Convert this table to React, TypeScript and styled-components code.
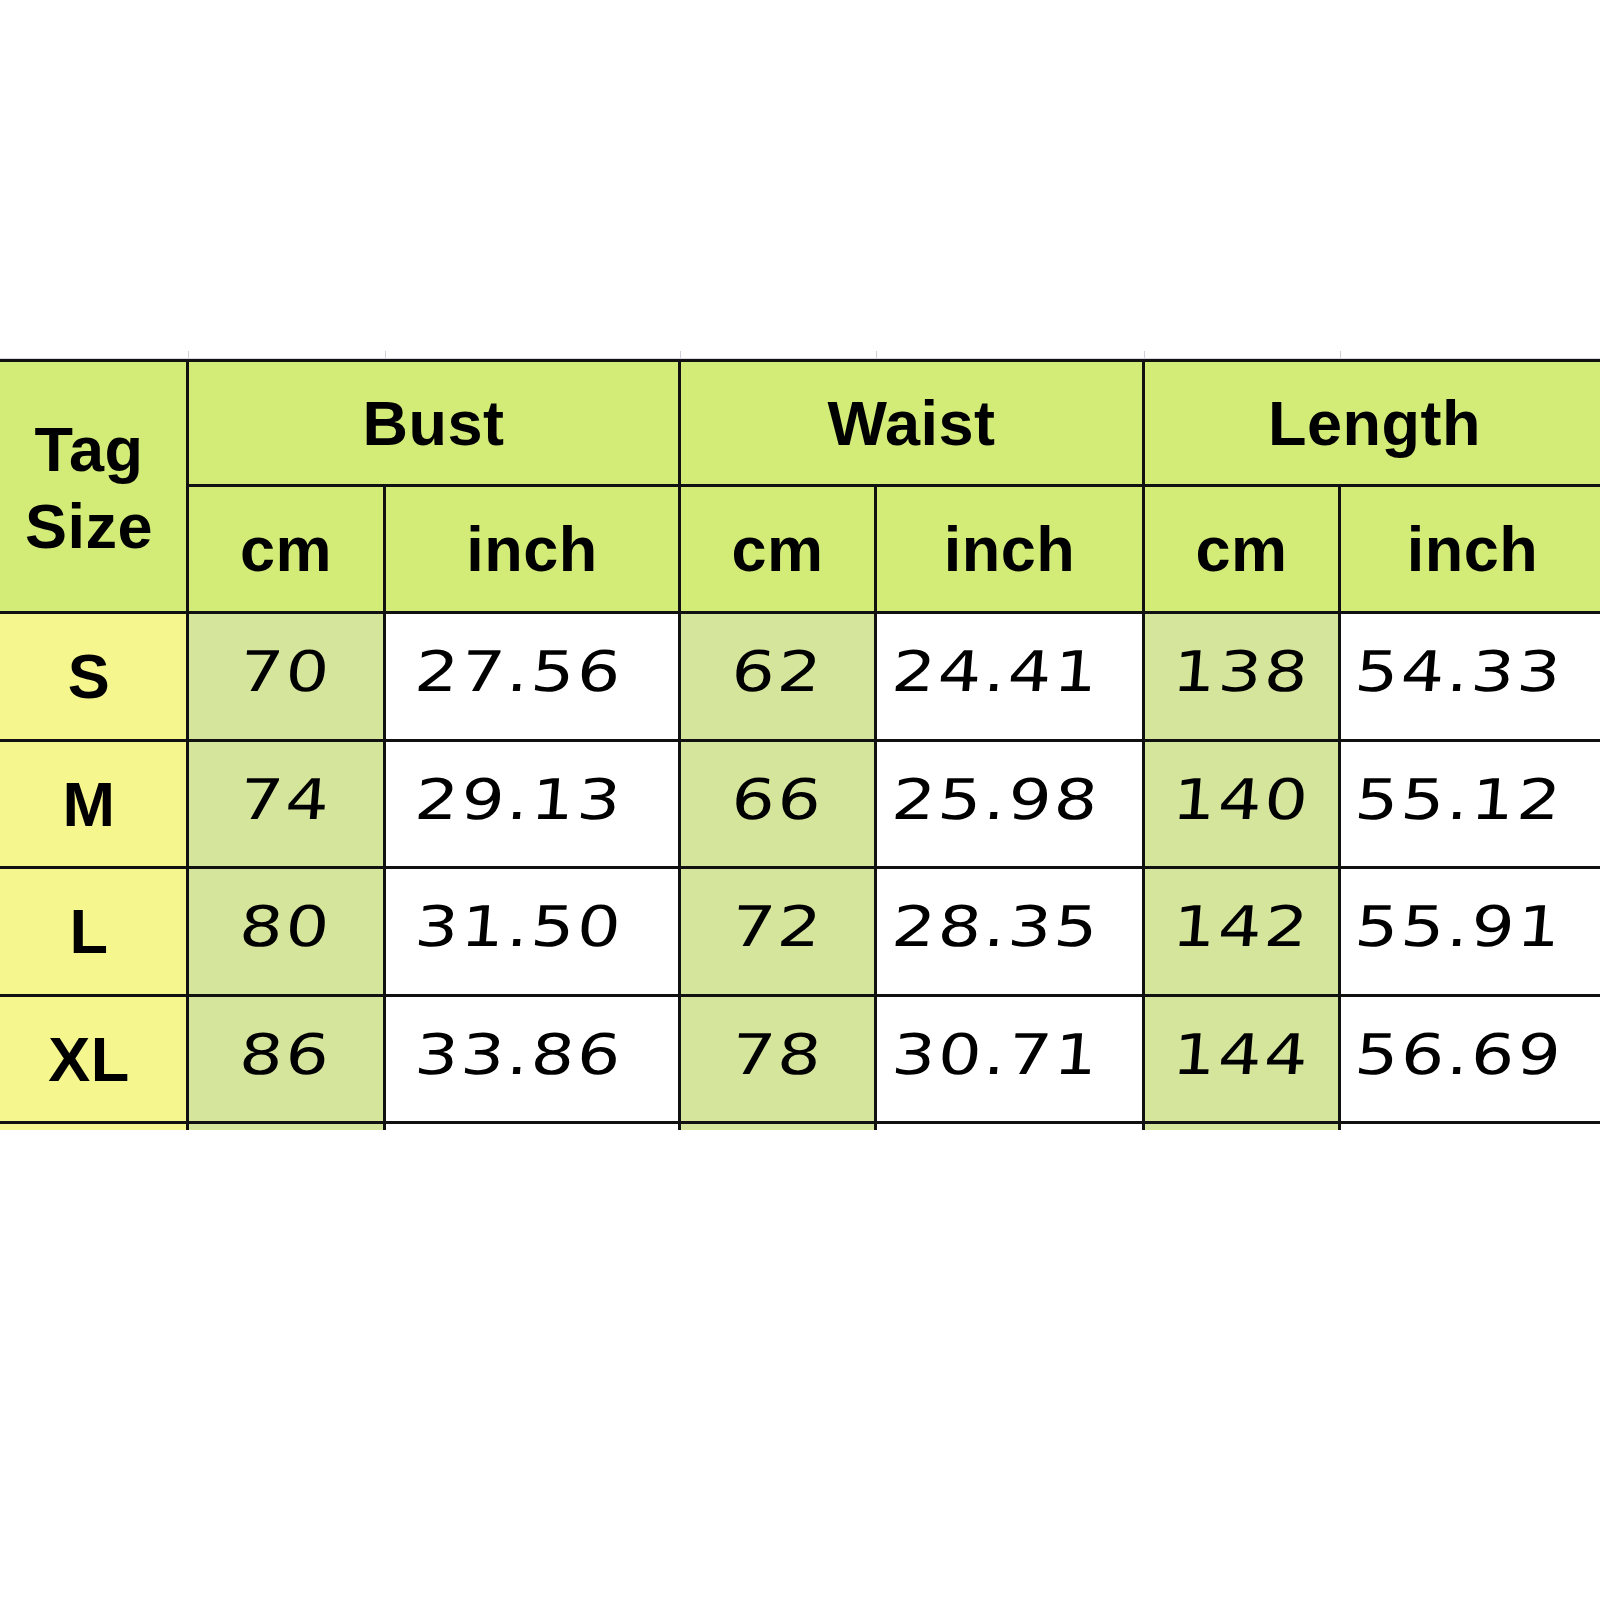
import React from "react";
import styled, { createGlobalStyle, css } from "styled-components";

const Global = createGlobalStyle`
  html, body { margin: 0; padding: 0; background: #ffffff; overflow: hidden; }
  body { width: 1600px; height: 1600px; }
`;

const Page = styled.div`
  width: 1600px;
  height: 1600px;
  overflow: hidden;
  padding-top: 351px;
  box-sizing: border-box;
`;

const Grid = styled.div`
  display: grid;
  width: 1607px;
  grid-template-columns: 189px 197px 295px 196px 268px 196px 266px;
  grid-template-rows: 8px 128px 127px 128px 127px 128px 127px 6px;
`;

const Tick = styled.div`
  box-sizing: border-box;
  border-right: 1px solid #cfd0d8;
  border-bottom: 1px solid #d8d8e0;
`;

type Tone = "head" | "tag" | "cm" | "plain";

const toneBg: Record<Tone, string> = {
  head: "#d3ec78",
  tag: "#f6f68f",
  cm: "#d5e59c",
  plain: "#ffffff",
};

const Cell = styled.div<{ $tone: Tone; $top?: boolean; $noBottom?: boolean; $inch?: boolean }>`
  box-sizing: border-box;
  background: ${(p) => toneBg[p.$tone]};
  border-right: 3px solid #111;
  border-bottom: ${(p) => (p.$noBottom ? "none" : "3px solid #111")};
  ${(p) =>
    p.$top &&
    css`
      border-top: 3px solid #111;
    `}
  display: flex;
  align-items: center;
  justify-content: center;
  color: #000;
  ${(p) =>
    p.$inch &&
    css`
      padding-right: 26px;
    `}
`;

const HeadText = styled.span`
  font-family: "Liberation Sans", Arial, sans-serif;
  font-weight: 700;
  font-size: 63px;
  line-height: 77px;
  text-align: center;
  letter-spacing: 0.5px;
`;

const TagText = styled(HeadText)`
  margin-right: 8px;
  margin-top: 2px;
`;

const RowLabel = styled(HeadText)`
  margin-right: 8px;
`;

const Num = styled.span`
  display: inline-block;
  font-family: "DejaVu Sans", sans-serif;
  font-weight: 400;
  font-size: 56px;
  letter-spacing: 2px;
  margin-bottom: 10px;
  transform: scaleX(1.22) skewX(-4deg);
`;

const rows = [
  { size: "S", v: ["70", "27.56", "62", "24.41", "138", "54.33"] },
  { size: "M", v: ["74", "29.13", "66", "25.98", "140", "55.12"] },
  { size: "L", v: ["80", "31.50", "72", "28.35", "142", "55.91"] },
  { size: "XL", v: ["86", "33.86", "78", "30.71", "144", "56.69"] },
];

const sliverTones: Tone[] = ["tag", "cm", "plain", "cm", "plain", "cm", "plain"];

export default function App() {
  return (
    <>
      <Global />
      <Page>
        <Grid>
          {Array.from({ length: 7 }).map((_, i) => (
            <Tick key={`t${i}`} />
          ))}
          <Cell $tone="head" $top style={{ gridRow: "2 / span 2", gridColumn: "1" }}>
            <TagText>
              Tag
              <br />
              Size
            </TagText>
          </Cell>
          <Cell $tone="head" $top style={{ gridColumn: "2 / span 2" }}>
            <HeadText>Bust</HeadText>
          </Cell>
          <Cell $tone="head" $top style={{ gridColumn: "4 / span 2" }}>
            <HeadText>Waist</HeadText>
          </Cell>
          <Cell $tone="head" $top style={{ gridColumn: "6 / span 2" }}>
            <HeadText>Length</HeadText>
          </Cell>
          {["cm", "inch", "cm", "inch", "cm", "inch"].map((u, i) => (
            <Cell key={`u${i}`} $tone="head">
              <HeadText>{u}</HeadText>
            </Cell>
          ))}
          {rows.map((r) => (
            <React.Fragment key={r.size}>
              <Cell $tone="tag">
                <RowLabel>{r.size}</RowLabel>
              </Cell>
              {r.v.map((val, i) => (
                <Cell key={i} $tone={i % 2 === 0 ? "cm" : "plain"} $inch={i % 2 === 1}>
                  <Num>{val}</Num>
                </Cell>
              ))}
            </React.Fragment>
          ))}
          {sliverTones.map((t, i) => (
            <Cell key={`s${i}`} $tone={t} $noBottom />
          ))}
        </Grid>
      </Page>
    </>
  );
}
